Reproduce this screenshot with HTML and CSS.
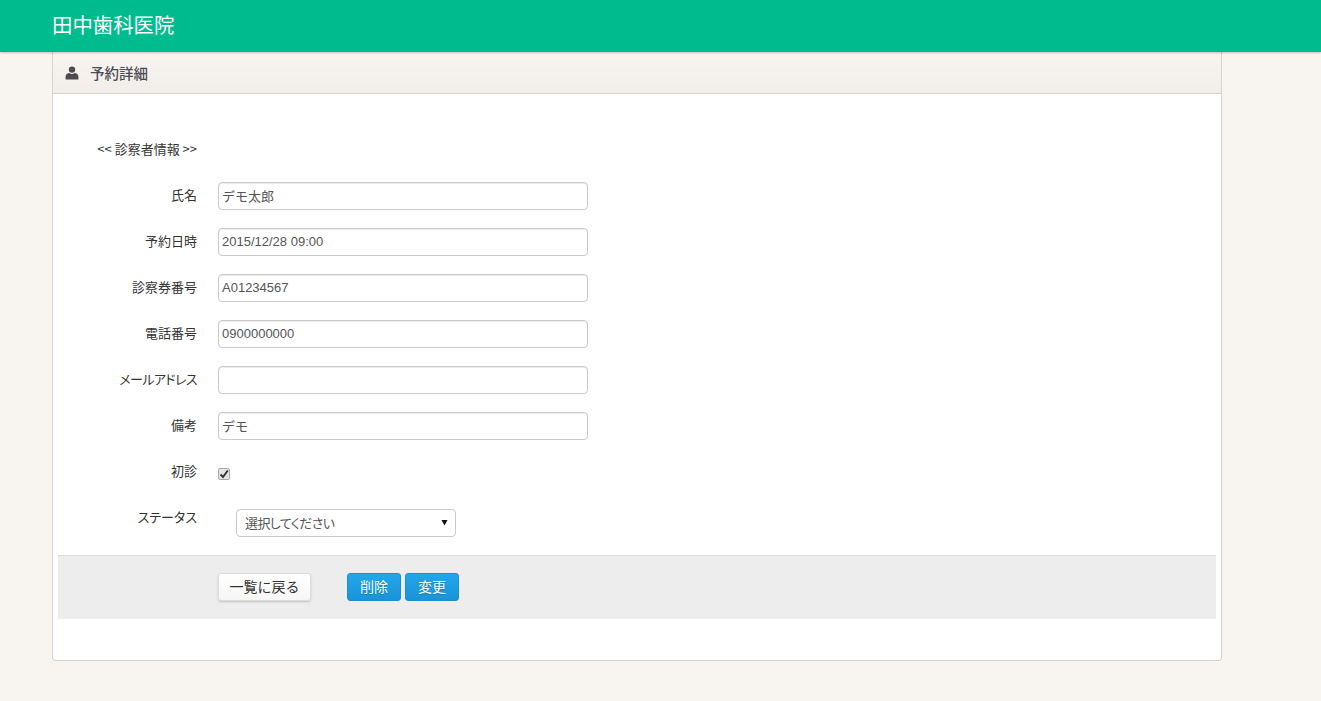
FILE: index.html
```html
<!DOCTYPE html>
<html lang="ja">
<head>
<meta charset="utf-8">
<title>予約詳細</title>
<link rel="stylesheet" href="styles.css">
</head>
<body>
<header class="topbar"><a class="brand">田中歯科医院</a></header>
<main class="card">
  <div class="card-head">
    <svg class="user-icon" viewBox="0 0 14 14" width="14" height="14"><circle cx="7" cy="3.6" r="3.2"/><path d="M0.6 13.6V10.6C0.6 8.4 2.6 7.3 4.4 7.1C5.2 7.7 6 8 7 8C8 8 8.8 7.7 9.6 7.1C11.4 7.3 13.4 8.4 13.4 10.6V13.6Z"/></svg>
    <h2 class="card-title">予約詳細</h2>
  </div>
  <form class="card-body">
    <div class="section-row"><span class="label">&lt;&lt; 診察者情報 &gt;&gt;</span></div>
    <div class="row"><label class="label">氏名</label><input class="field" type="text" value="デモ太郎"></div>
    <div class="row"><label class="label">予約日時</label><input class="field" type="text" value="2015/12/28 09:00"></div>
    <div class="row"><label class="label">診察券番号</label><input class="field" type="text" value="A01234567"></div>
    <div class="row"><label class="label">電話番号</label><input class="field" type="text" value="0900000000"></div>
    <div class="row"><label class="label label-kana">メールアドレス</label><input class="field" type="text" value=""></div>
    <div class="row"><label class="label">備考</label><input class="field" type="text" value="デモ"></div>
    <div class="row row-check"><label class="label">初診</label><input class="check" type="checkbox" checked></div>
    <div class="row row-select"><label class="label">ステータス</label>
      <div class="select-box"><span class="select-text">選択してください</span><svg class="caret" viewBox="0 0 7 7" width="7" height="7"><path d="M0.5 1H6.5L3.5 6.5Z"/></svg></div>
    </div>
    <div class="actions">
      <button class="btn btn-white" type="button">一覧に戻る</button>
      <div class="btn-group">
        <button class="btn btn-blue" type="button">削除</button>
        <button class="btn btn-blue" type="button">変更</button>
      </div>
    </div>
  </form>
</main>
</body>
</html>
```
FILE: styles.css
```css
* { box-sizing: border-box; }
html, body { margin: 0; padding: 0; height: 100%; }
body {
  background: #f8f5f0;
  font-family: "Noto Sans CJK JP", "Liberation Sans", sans-serif;
  font-size: 13px;
  color: #333;
  overflow: hidden;
}
input, button { font-family: "Liberation Sans", "Noto Sans CJK JP", sans-serif; }
.topbar {
  height: 52px;
  background: #00bb8d;
  box-shadow: 0 1px 2px rgba(0, 0, 0, 0.22);
  padding-left: 52px;
  display: flex;
  align-items: center;
  position: relative;
  z-index: 1;
}
.brand { color: #fff; font-size: 20.4px; font-weight: 400; line-height: 50px; margin-bottom: 4px; }
.card {
  margin-left: 52px;
  width: 1170px;
  height: 609px;
  background: #fff;
  border: 1px solid #d5d3d0;
  border-top: 0;
  border-radius: 0 0 4px 4px;
}
.card-head {
  height: 42px;
  margin-top: 0;
  display: flex;
  align-items: center;
  padding-left: 12px;
  background: linear-gradient(#f8f5f0, #f1eeea);
  border-bottom: 1px solid #d5d3d0;
}
.user-icon { fill: #4b4b50; margin-right: 11px; }
.card-title { margin: 0; font-size: 14.5px; font-weight: 500; color: #4b4b55; line-height: 40px; }
.card-body { padding: 0 5px; display: block; }
.section-row { height: 88px; display: flex; align-items: flex-end; margin-left: -5px; padding-bottom: 23px; }
.row { display: flex; align-items: flex-start; height: 28px; margin: 0 0 18px -5px; }
.label {
  width: 144px;
  flex: none;
  text-align: right;
  font-size: 13px;
  font-feature-settings: "palt";
  line-height: 26px;
  color: #333;
}
.label-kana { letter-spacing: -0.6px; }
.section-row .label { line-height: 20px; font-feature-settings: normal; }
.field {
  width: 370px;
  height: 28px;
  margin-left: 21px;
  padding: 0 3px 2px;
  border: 1px solid #c9c9c9;
  border-radius: 4px;
  box-shadow: inset 0 1px 1px rgba(0, 0, 0, 0.075);
  background: #fff;
  color: #555;
  font-size: 13px;
  outline: none;
}
.row-check { height: 34px; margin-bottom: 0; align-items: flex-start; }
.check {
  appearance: none;
  width: 12px;
  height: 12px;
  margin: 10px 0 0 21px;
  border: 1px solid #aaa;
  border-radius: 2px;
  background: #e4e4e4 center / 10px 10px no-repeat url("data:image/svg+xml;utf8,<svg xmlns='http://www.w3.org/2000/svg' viewBox='0 0 10 10'><path d='M1.5 5.5L4 8L8.8 1.5' fill='none' stroke='%23333' stroke-width='1.9'/></svg>");
}
.row-select { height: 28px; margin-top: 15px; margin-bottom: 18px; }
.row-check + .row-select { margin-top: 17px; }
.row-select .label { line-height: 16px; }
.select-box {
  width: 220px;
  height: 28px;
  margin-left: 39px;
  padding: 0 8px 2px;
  display: flex;
  align-items: center;
  justify-content: space-between;
  border: 1px solid #c9c9c9;
  border-radius: 4px;
  background: #fff;
  color: #555;
  font-size: 13px;
  font-feature-settings: "palt";
}
.select-text { letter-spacing: -0.6px; }
.caret { fill: #111; margin-right: -1px; }
.actions {
  height: 64px;
  background: #ededed;
  border-top: 1px solid #ddd;
  padding: 17px 0 0 160px;
  display: flex;
  align-items: flex-start;
}
.btn {
  height: 28px;
  padding: 0 0 2px;
  border-radius: 3px;
  font-family: "Noto Sans CJK JP", sans-serif;
  font-size: 14px;
  cursor: pointer;
}
.btn-white {
  width: 93px;
  background: linear-gradient(#fff, #f6f6f6);
  border: 1px solid #dcdcdc;
  box-shadow: 0 1px 2px rgba(0, 0, 0, 0.18);
  color: #333;
}
.btn-group { display: flex; gap: 4px; margin-left: 36px; }
.btn-blue {
  width: 54px;
  background: linear-gradient(#22a7ea, #1a94d8);
  border: 1px solid #1b8fd0;
  color: #fff;
  text-shadow: 0 1px 1px rgba(0, 0, 0, 0.2);
}
```
